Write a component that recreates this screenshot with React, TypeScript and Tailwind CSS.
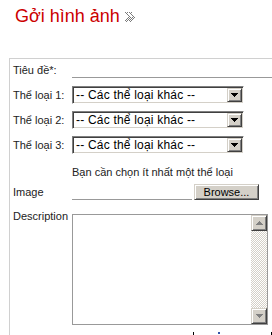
import React from 'react';

const label = "text-[11px] leading-[13px] text-[#222]";

// dithered double chevron next to the heading
const Chevron = () => {
  const cells: React.ReactNode[] = [];
  for (let r = 0; r < 10; r++) {
    const d = Math.floor(Math.min(r, 9 - r) * 0.8);
    for (const c of [0, 4]) {
      for (let t = 0; t < 3; t++) {
        const x = c + d + t;
        if ((x + r) % 2 === 0) cells.push(<rect key={`${r}-${c}-${t}`} x={x} y={r} width={1} height={1} fill="#7a7a7a" />);
      }
    }
  }
  return (
    <svg width="11" height="10" viewBox="0 0 11 10" shapeRendering="crispEdges" className="ml-[5px] mt-[1px]">
      {cells}
    </svg>
  );
};

const Arrow = ({ up, color }: { up?: boolean; color: string }) => (
  <svg width="7" height="4" viewBox="0 0 7 4" shapeRendering="crispEdges">
    <polygon points={up ? '3.5,0 7,4 0,4' : '0,0 7,0 3.5,4'} fill={color} />
  </svg>
);

const RaisedBtn = ({ className, children }: { className: string; children: React.ReactNode }) => (
  <div
    className={`flex items-center justify-center bg-[#d4d0c8] border border-[#d4d0c8] border-r-[#404040] border-b-[#404040] shadow-[inset_1px_1px_0_#fff,inset_-1px_-1px_0_#808080] ${className}`}
  >
    {children}
  </div>
);

const Select = () => (
  <div className="flex w-[172px] h-[18px] bg-white border border-[#808080] border-r-white border-b-white shadow-[inset_1px_1px_0_#404040,inset_-1px_-1px_0_#d4d0c8] p-[1px]">
    <div className="flex-1 flex items-center pl-[2px] text-[12px] leading-[14px] tracking-[0.2px] text-black whitespace-nowrap">
      -- Các thể loại khác --
    </div>
    <RaisedBtn className="w-[15px] h-[14px]">
      <Arrow color="#000" />
    </RaisedBtn>
  </div>
);

export default function App() {
  return (
    <div className="w-[272px] h-[335px] overflow-hidden bg-white font-['Liberation_Sans',Arial,sans-serif]">
      <div className="flex items-center pt-[6px] pl-[15px]">
        <h1 className="text-[18px] leading-[21px] text-[#cc0000] font-normal">Gởi hình ảnh</h1>
        <Chevron />
      </div>

      <div className="ml-[9px] mt-[31px] border-t border-l border-[#d0d0d0] pl-[3px]">
        <div className="grid grid-cols-[59px_1fr] items-center mt-[3px] h-[16px]">
          <span className={label}>Tiêu đề*:</span>
          <div className="h-[16px] border-b border-[#999]" />
        </div>

        {[1, 2, 3].map((n, i) => (
          <div key={n} className={`grid grid-cols-[59px_1fr] items-center h-[18px] ${i === 0 ? 'mt-[8px]' : 'mt-[7px]'}`}>
            <span className={label}>Thể loại {n}:</span>
            <Select />
          </div>
        ))}

        <div className="grid grid-cols-[59px_1fr] mt-[12px]">
          <span />
          <span className={`${label} whitespace-nowrap`}>Bạn cần chọn ít nhất một thể loại</span>
        </div>

        <div className="grid grid-cols-[59px_1fr] items-center mt-[5px] h-[16px]">
          <span className={label}>Image</span>
          <div className="flex">
            <div className="w-[120px] h-[16px] border-b border-[#999]" />
            <RaisedBtn className="ml-[2px] w-[65px] h-[16px] text-[11px] leading-[13px] text-black">Browse...</RaisedBtn>
          </div>
        </div>

        <div className="grid grid-cols-[59px_1fr] items-start mt-[14px]">
          <span className={`${label} -mt-[4px]`}>Description</span>
          <div className="flex w-[196px] h-[111px] border border-[#999] bg-white">
            <div className="flex-1" />
            <div className="flex flex-col w-[16px]">
              <RaisedBtn className="w-[16px] h-[16px]">
                <Arrow up color="#808080" />
              </RaisedBtn>
              <div className="flex-1 bg-[repeating-conic-gradient(#d4d0c8_0_25%,#fff_0_50%)] bg-[length:2px_2px]" />
              <RaisedBtn className="w-[16px] h-[16px]">
                <Arrow color="#808080" />
              </RaisedBtn>
            </div>
          </div>
        </div>

        <div className="flex mt-[7px] h-[4px]">
          <span className="ml-[180px] w-px h-[3px] bg-black" />
          <span className="ml-[24px] w-[2px] h-[2px] bg-[#3355aa]" />
          <span className="ml-[51px] w-px h-[3px] bg-black" />
        </div>
      </div>
    </div>
  );
}
